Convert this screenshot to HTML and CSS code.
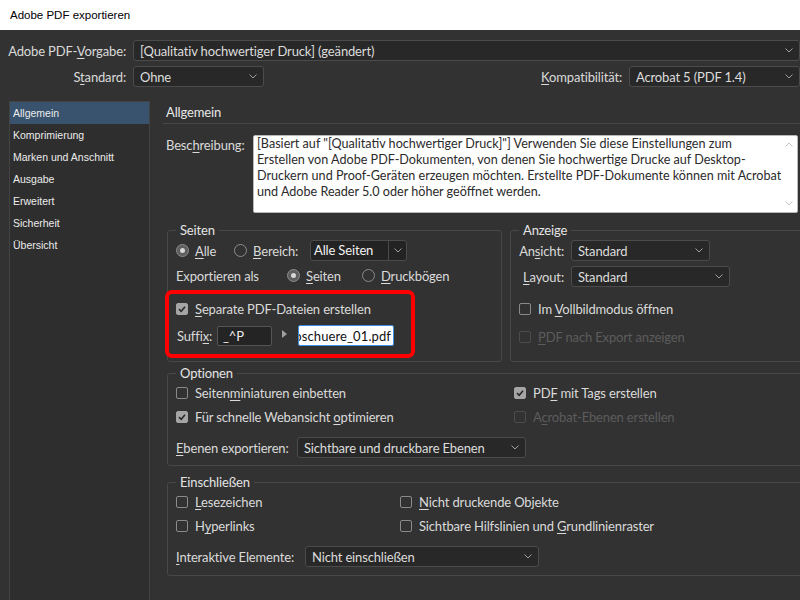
FILE: index.html
```html
<!DOCTYPE html>
<html lang="de">
<head>
<meta charset="utf-8">
<title>Adobe PDF exportieren</title>
<link rel="stylesheet" href="styles.css">
</head>
<body>
<div class="titlebar">Adobe PDF exportieren</div>
<div class="dialog">
  <div class="presets">
    <div class="preset-row">
      <span class="preset-label">Adobe PDF-<u>V</u>orgabe:</span>
      <div class="select sel-vorgabe"><span class="val">[Qualitativ hochwertiger Druck] (geändert)</span><svg class="chev" width="8" height="5" viewBox="0 0 8 5"><path d="M0.5 0.5 L4 4 L7.5 0.5"/></svg></div>
    </div>
    <div class="preset-row">
      <span class="preset-label">S<u>t</u>andard:</span>
      <div class="select sel-standard"><span class="val">Ohne</span><svg class="chev" width="8" height="5" viewBox="0 0 8 5"><path d="M0.5 0.5 L4 4 L7.5 0.5"/></svg></div>
      <span class="kompat-label"><u>K</u>ompatibilität:</span>
      <div class="select sel-kompat"><span class="val">Acrobat 5 (PDF 1.4)</span><svg class="chev" width="8" height="5" viewBox="0 0 8 5"><path d="M0.5 0.5 L4 4 L7.5 0.5"/></svg></div>
    </div>
  </div>

  <div class="main">
    <nav class="sidebar">
      <div class="nav-item active">Allgemein</div>
      <div class="nav-item">Komprimierung</div>
      <div class="nav-item">Marken und Anschnitt</div>
      <div class="nav-item">Ausgabe</div>
      <div class="nav-item">Erweitert</div>
      <div class="nav-item">Sicherheit</div>
      <div class="nav-item">Übersicht</div>
    </nav>

    <section class="content">
      <h2 class="section-title">Allgemein</h2>

      <div class="desc-row">
        <span class="desc-label">Besc<u>h</u>reibung:</span>
        <div class="textarea">
          <div class="ta-text">
            <div class="ta-line">[Basiert auf "[Qualitativ hochwertiger Druck]"] Verwenden Sie diese Einstellungen zum</div>
            <div class="ta-line">Erstellen von Adobe PDF-Dokumenten, von denen Sie hochwertige Drucke auf Desktop-</div>
            <div class="ta-line">Druckern und Proof-Geräten erzeugen möchten. Erstellte PDF-Dokumente können mit Acrobat</div>
            <div class="ta-line">und Adobe Reader 5.0 oder höher geöffnet werden.</div>
          </div>
          <div class="ta-scroll">
            <svg width="8" height="5" viewBox="0 0 8 5"><path d="M0.5 4.5 L4 1 L7.5 4.5"/></svg>
            <svg width="8" height="5" viewBox="0 0 8 5"><path d="M0.5 0.5 L4 4 L7.5 0.5"/></svg>
          </div>
        </div>
      </div>

      <div class="group-row">
        <fieldset class="group g-seiten">
          <legend>Seiten</legend>
          <div class="row r-first">
            <span class="radio on"></span><span class="opt w-alle"><u>A</u>lle</span>
            <span class="radio"></span><span class="opt w-bereich"><u>B</u>ereich:</span>
            <div class="combo"><span class="combo-val">Alle Seiten</span><span class="combo-btn"><svg class="chev" width="8" height="5" viewBox="0 0 8 5"><path d="M0.5 0.5 L4 4 L7.5 0.5"/></svg></span></div>
          </div>
          <div class="row r-second">
            <span class="opt w-export">Exportieren als</span>
            <span class="radio on"></span><span class="opt w-seiten"><u>S</u>eiten</span>
            <span class="radio"></span><span class="opt"><u>D</u>ruckbögen</span>
          </div>
          <div class="highlight">
            <div class="row r-check">
              <span class="cb on"><svg width="10" height="10" viewBox="0 0 10 10"><path d="M2 5.2 L4.2 7.3 L8 2.8"/></svg></span>
              <span><u>S</u>eparate PDF-Dateien erstellen</span>
            </div>
            <div class="row r-suffix">
              <span class="suffix-label">Suffi<u>x</u>:</span>
              <span class="input-dark">_^P</span>
              <span class="tri"></span>
              <span class="input-white"><span>Broschuere_01.pdf</span></span>
            </div>
          </div>
        </fieldset>

        <fieldset class="group g-anzeige">
          <legend>Anzeige</legend>
          <div class="row a-first">
            <span class="a-label">An<u>s</u>icht:</span>
            <div class="select sel-ansicht"><span class="val">Standard</span><svg class="chev" width="8" height="5" viewBox="0 0 8 5"><path d="M0.5 0.5 L4 4 L7.5 0.5"/></svg></div>
          </div>
          <div class="row a-second">
            <span class="a-label"><u>L</u>ayout:</span>
            <div class="select sel-layout"><span class="val">Standard</span><svg class="chev" width="8" height="5" viewBox="0 0 8 5"><path d="M0.5 0.5 L4 4 L7.5 0.5"/></svg></div>
          </div>
          <div class="row a-check">
            <span class="cb"></span><span>Im <u>V</u>ollbildmodus öffnen</span>
          </div>
          <div class="row a-check2 disabled">
            <span class="cb"></span><span><u>P</u>DF nach Export anzeigen</span>
          </div>
        </fieldset>
      </div>

      <fieldset class="group g-optionen">
        <legend>Optionen</legend>
        <div class="check-grid opt-grid">
          <div class="row crow"><span class="cb"></span><span>Seiten<u>m</u>iniaturen einbetten</span></div>
          <div class="row crow"><span class="cb on"><svg width="10" height="10" viewBox="0 0 10 10"><path d="M2 5.2 L4.2 7.3 L8 2.8"/></svg></span><span>PD<u>F</u> mit Tags erstellen</span></div>
          <div class="row crow"><span class="cb on"><svg width="10" height="10" viewBox="0 0 10 10"><path d="M2 5.2 L4.2 7.3 L8 2.8"/></svg></span><span>Für schnelle Webansicht <u>o</u>ptimieren</span></div>
          <div class="row crow disabled"><span class="cb"></span><span>A<u>c</u>robat-Ebenen erstellen</span></div>
        </div>
        <div class="row sel-row">
          <span class="lbl-ebenen"><u>E</u>benen exportieren:</span>
          <div class="select sel-ebenen"><span class="val">Sichtbare und druckbare Ebenen</span><svg class="chev" width="8" height="5" viewBox="0 0 8 5"><path d="M0.5 0.5 L4 4 L7.5 0.5"/></svg></div>
        </div>
      </fieldset>

      <fieldset class="group g-einschl">
        <legend>Einschließen</legend>
        <div class="check-grid ein-grid">
          <div class="row crow"><span class="cb"></span><span><u>L</u>esezeichen</span></div>
          <div class="row crow"><span class="cb"></span><span><u>N</u>icht druckende Objekte</span></div>
          <div class="row crow"><span class="cb"></span><span>H<u>y</u>perlinks</span></div>
          <div class="row crow"><span class="cb"></span><span>Sichtbare Hilfslinien und <u>G</u>rundlinienraster</span></div>
        </div>
        <div class="row sel-row">
          <span class="lbl-inter"><u>I</u>nteraktive Elemente:</span>
          <div class="select sel-inter"><span class="val">Nicht einschließen</span><svg class="chev" width="8" height="5" viewBox="0 0 8 5"><path d="M0.5 0.5 L4 4 L7.5 0.5"/></svg></div>
        </div>
      </fieldset>
    </section>
  </div>
</div>
</body>
</html>
```

FILE: styles.css
```css
* { box-sizing: border-box; }

html, body {
  margin: 0;
  padding: 0;
}

body {
  width: 800px;
  height: 600px;
  overflow: hidden;
  background: #323232;
  font-family: Lato, "Noto Sans", sans-serif;
  font-size: 13px;
  letter-spacing: -0.15px;
  color: #dadada;
}

u {
  text-decoration: underline;
  text-underline-offset: 2px;
  text-decoration-thickness: 1px;
}

.titlebar {
  height: 30px;
  background: #ffffff;
  color: #000000;
  font-family: "Liberation Sans", sans-serif;
  font-size: 11.5px;
  letter-spacing: 0;
  line-height: 30px;
  padding-left: 10px;
}

.dialog {
  width: 800px;
}

/* ---------- presets ---------- */
.presets {
  padding-top: 10px;
  display: flex;
  flex-direction: column;
  gap: 5px;
}

.preset-row {
  display: flex;
  align-items: center;
  height: 21px;
}

.preset-label {
  width: 126px;
  text-align: right;
  margin-right: 7px;
  white-space: nowrap;
}

.kompat-label {
  margin-left: auto;
  margin-right: 7px;
  white-space: nowrap;
}

.select {
  display: flex;
  align-items: center;
  height: 21px;
  background: #282828;
  border: 1px solid #4b4b4b;
  border-radius: 3px;
  padding: 0 6px 0 6px;
  color: #dcdcdc;
  flex: none;
}

.select .val {
  flex: 1;
  white-space: nowrap;
  overflow: hidden;
}

.chev {
  flex: none;
  display: block;
}

.chev path,
.ta-scroll path {
  fill: none;
  stroke: #a0a0a0;
  stroke-width: 1;
}

.sel-vorgabe { width: 667px; }
.sel-standard { width: 131px; }
.sel-kompat { width: 171px; }
.sel-ansicht { width: 139px; }
.sel-layout { width: 159px; }
.sel-ebenen { width: 229px; }
.sel-inter { width: 234px; }

/* ---------- main ---------- */
.main {
  display: flex;
  margin-top: 14px;
}

.sidebar {
  margin-left: 9px;
  width: 141px;
  height: 520px;
  flex: none;
  background: #2e2e2e;
  border: 1px solid #434343;
  font-family: "Liberation Sans", sans-serif;
  font-size: 10.5px;
  letter-spacing: 0;
}

.nav-item {
  height: 22px;
  line-height: 22px;
  padding-left: 3px;
  color: #ececec;
  white-space: nowrap;
}

.nav-item.active {
  background: #39536e;
}

.content {
  width: 660px;
  flex: none;
  padding-left: 13px;
}

.section-title {
  margin: 1px 0 0 0;
  height: 22px;
  line-height: 21px;
  padding-left: 3px;
  border-bottom: 1px solid #464646;
  font-size: 13px;
  font-weight: normal;
  color: #e8e8e8;
}

.desc-row {
  display: flex;
  margin-top: 11px;
  padding-left: 3px;
}

.desc-label {
  width: 87px;
  line-height: 20px;
  flex: none;
}

.textarea {
  width: 545px;
  height: 78px;
  background: #ffffff;
  border: 1px solid #b9b9b9;
  border-radius: 2px;
  display: flex;
  color: #2b2b2b;
}

.ta-text {
  flex: 1;
  padding: 0 0 0 3px;
  font-size: 12.6px;
  letter-spacing: 0;
  line-height: 16px;
  overflow: hidden;
}

.ta-line {
  white-space: nowrap;
}

.ta-scroll {
  width: 16px;
  flex: none;
  display: flex;
  flex-direction: column;
  justify-content: space-between;
  align-items: center;
  padding: 6px 0 6px 0;
}

.ta-scroll path {
  stroke: #c4c4c4;
}

/* ---------- groups ---------- */
.group {
  margin: 0;
  border: 1px solid #484848;
  border-radius: 3px;
  padding: 0 8px;
  min-width: 0;
}

.group legend {
  padding: 0 4px;
  line-height: 16px;
  font-size: 13px;
  color: #e4e4e4;
}

.group-row {
  display: flex;
  gap: 8px;
  margin-top: 9px;
  margin-left: 4px;
  width: 643px;
}

.g-seiten {
  width: 335px;
  flex: none;
  padding-bottom: 3px;
}

.g-anzeige {
  flex: 1;
}

.row {
  display: flex;
  align-items: center;
  height: 21px;
  white-space: nowrap;
}

.r-first { margin-top: 2px; }
.r-second { margin-top: 4px; }

.radio {
  width: 13px;
  height: 13px;
  border-radius: 50%;
  border: 1px solid #8c8c8c;
  margin-right: 6px;
  flex: none;
  display: flex;
  align-items: center;
  justify-content: center;
}

.radio.on {
  background: #5e5e5e;
}

.radio.on::after {
  content: "";
  width: 5px;
  height: 5px;
  border-radius: 50%;
  background: #d6d6d6;
}

.opt { flex: none; }
.w-alle { width: 39px; }
.w-bereich { width: 57px; }
.w-export { width: 111px; }
.w-seiten { width: 56px; }

.combo {
  display: flex;
  width: 97px;
  height: 21px;
  border: 1px solid #4b4b4b;
  border-radius: 3px;
  background: #232323;
}

.combo-val {
  flex: 1;
  padding-left: 3px;
  line-height: 19px;
  color: #f2f2f2;
  border-right: 1px solid #4b4b4b;
}

.combo-btn {
  width: 17px;
  display: flex;
  align-items: center;
  justify-content: center;
}

.highlight {
  margin: 4px 0 0 -11px;
  width: 250px;
  border: 4px solid #ff0000;
  border-radius: 7px;
  padding: 4px 0 8px 7px;
}

.r-check { height: 22px; }
.r-suffix { margin-top: 5px; }

.cb {
  width: 12px;
  height: 12px;
  border: 1px solid #8a8a8a;
  border-radius: 2px;
  margin-right: 7px;
  flex: none;
  display: flex;
  align-items: center;
  justify-content: center;
}

.cb.on {
  background: #a5a5a5;
  border-color: #a5a5a5;
}

.cb svg path {
  fill: none;
  stroke: #2a2a2a;
  stroke-width: 1.6;
}

.suffix-label {
  width: 41px;
  padding-left: 1px;
  flex: none;
}

.input-dark {
  width: 55px;
  height: 20px;
  background: #242424;
  border: 1px solid #555555;
  border-radius: 2px;
  padding-left: 5px;
  line-height: 18px;
  color: #ececec;
  flex: none;
}

.tri {
  width: 0;
  height: 0;
  border-top: 4px solid transparent;
  border-bottom: 4px solid transparent;
  border-left: 5px solid #a0a0a0;
  margin-left: 10px;
  margin-bottom: 3px;
  flex: none;
}

.input-white {
  margin-left: 11px;
  width: 96px;
  height: 21px;
  background: #ffffff;
  border: 1px solid #3b8fe3;
  border-radius: 2px;
  color: #111111;
  letter-spacing: 0.1px;
  display: flex;
  justify-content: flex-end;
  align-items: center;
  overflow: hidden;
  padding-right: 2px;
  flex: none;
}

.input-white span {
  flex: none;
}

/* Anzeige */
.a-first { margin-top: 2px; }
.a-second { margin-top: 5px; }
.a-check { margin-top: 11px; height: 22px; }
.a-check2 { margin-top: 6px; height: 22px; }

.a-label {
  width: 45px;
  text-align: right;
  margin-right: 7px;
  flex: none;
}

.disabled {
  color: #5c5c5c;
}

.disabled .cb {
  border-color: #4c4c4c;
}

/* Optionen / Einschließen */
.g-optionen {
  margin: 3px 0 0 4px;
  width: 643px;
  padding-bottom: 7px;
}

.g-einschl {
  margin: 8px 0 0 4px;
  width: 643px;
  padding-bottom: 8px;
}

.check-grid {
  display: grid;
}

.opt-grid { grid-template-columns: 338px auto; }
.ein-grid { grid-template-columns: 224px auto; }

.crow { height: 24px; }

.sel-row { margin-top: 8px; }

.lbl-ebenen { width: 121px; flex: none; }
.lbl-inter { width: 129px; flex: none; }
```
